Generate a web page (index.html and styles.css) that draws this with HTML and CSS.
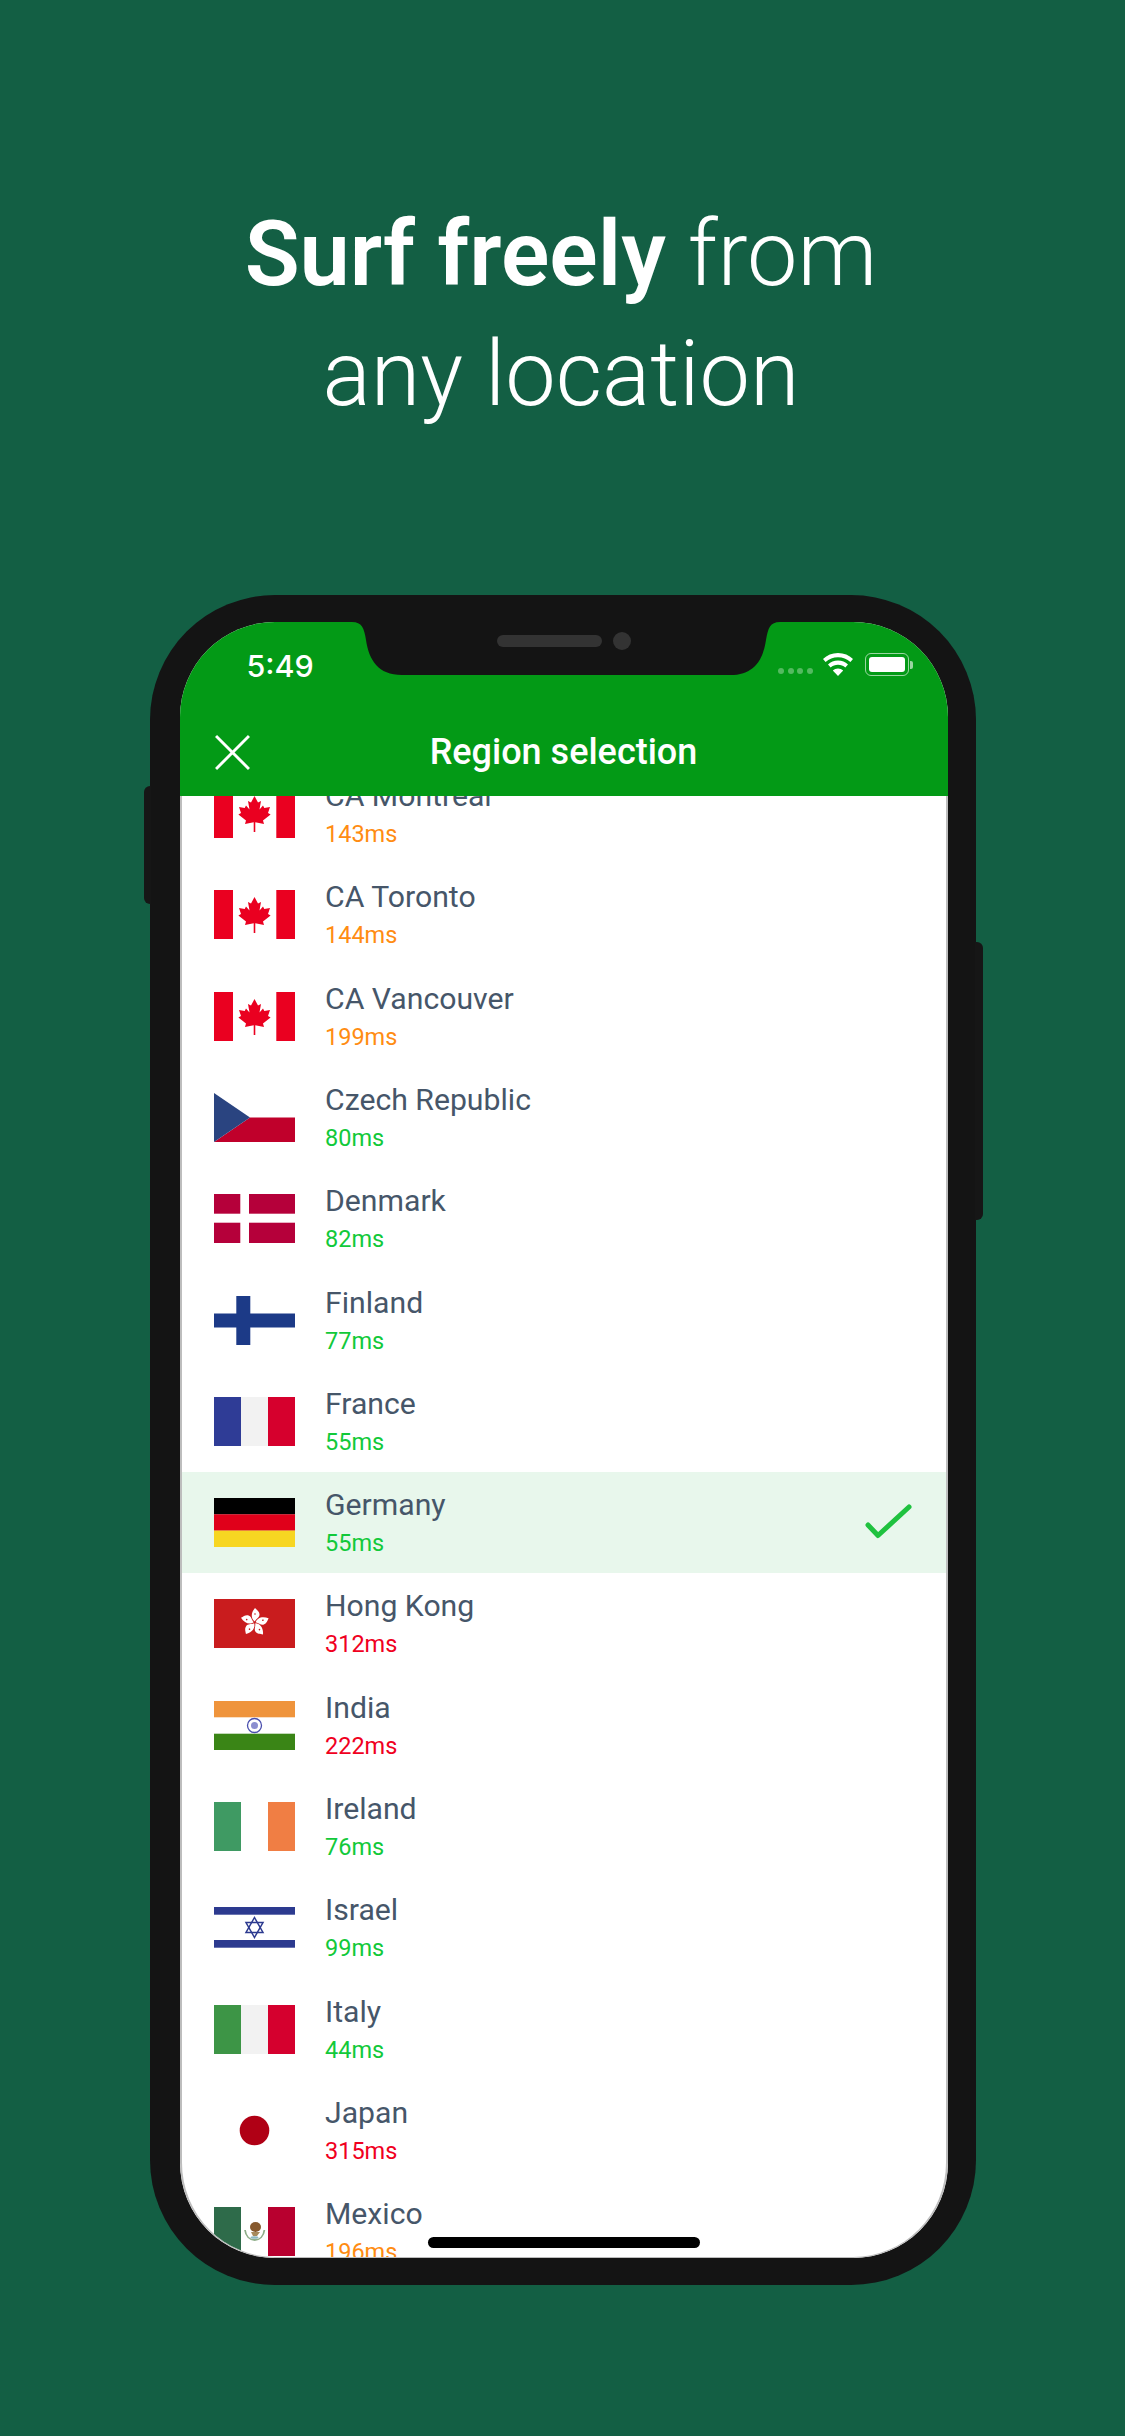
FILE: index.html
```html
<!DOCTYPE html>
<html lang="en">
<head>
<meta charset="utf-8">
<title>Surf freely from any location</title>
<link rel="stylesheet" href="styles.css">
</head>
<body>
<svg class="defs" width="0" height="0" aria-hidden="true">
  <defs>
    <symbol id="flag-ca" viewBox="0 0 81 49">
      <rect x="0" y="0" width="19" height="49" fill="#ea0020"/>
      <rect x="62.3" y="0" width="18.7" height="49" fill="#ea0020"/>
      <polygon fill="#ea0020" points="40.5,7 44,13.5 47,12 45.5,20.5 49,16.5 50.3,19 56,18 54,24 56.6,25.5 49,31.5 50,35 41.3,33.3 41.3,43 39.7,43 39.7,33.3 31,35 32,31.5 24.4,25.5 27,24 25,18 30.7,19 32,16.5 35.5,20.5 34,12 37,13.5"/>
    </symbol>
    <g id="hk-petal">
      <path fill="#fff" d="M40.700 22.500C37 20 36.500 14 41 9C43 11 45.500 12.500 45.500 15.500C45.500 18.500 42.500 19.500 40.700 22.500Z"/>
      <circle cx="41" cy="15" r=".8" fill="#c91c1e"/>
    </g>
  </defs>
</svg>
<main class="page">
  <h1 class="headline"><strong>Surf freely</strong> from<br>any location</h1>
  <div class="phone">
    <span class="side side-left"></span>
    <span class="side side-right"></span>
    <div class="screen">
      <header class="appbar">
        <div class="status">
          <span class="time">5:49</span>
          <div class="status-icons">
            <span class="dots"><i></i><i></i><i></i><i></i></span>
            <svg class="wifi" viewBox="0 0 30 23"><path fill="#fff" d="M15 0C9 0 4 2.3 0 6l2.6 3C6 6 10.3 4.2 15 4.2S24 6 27.400 9L30 6C26 2.300 21 0 15 0Z"/><path fill="#fff" d="M15 7.600C11 7.600 7.700 9 5 11.500l2.700 3C9.600 12.800 12.200 11.800 15 11.800s5.400 1 7.300 2.700l2.700-3C22.300 9 19 7.600 15 7.600Z"/><path fill="#fff" d="M15 15.400c-2 0-3.800.7-5.200 2L15 23l5.200-5.600c-1.400-1.300-3.200-2-5.200-2Z"/></svg>
            <span class="battery"><span class="battery-fill"></span></span>
            <span class="battery-nub"></span>
          </div>
        </div>
        <div class="navbar">
          <svg class="close" viewBox="0 0 34 34"><path d="M1 1L33 33M33 1L1 33" stroke="#fff" stroke-width="2.800" fill="none"/></svg>
          <h2 class="nav-title">Region selection</h2>
        </div>
      </header>
      <div class="viewport">
        <ul class="list">
          <li class="row">
            <svg class="flag" viewBox="0 0 81 49"><use href="#flag-ca"/></svg>
            <div class="info"><span class="name">CA Montreal</span><span class="ping mid">143ms</span></div>
          </li>
          <li class="row">
            <svg class="flag" viewBox="0 0 81 49"><use href="#flag-ca"/></svg>
            <div class="info"><span class="name">CA Toronto</span><span class="ping mid">144ms</span></div>
          </li>
          <li class="row">
            <svg class="flag" viewBox="0 0 81 49"><use href="#flag-ca"/></svg>
            <div class="info"><span class="name">CA Vancouver</span><span class="ping mid">199ms</span></div>
          </li>
          <li class="row">
            <svg class="flag" viewBox="0 0 81 49"><polygon fill="#c0002b" points="36,24.500 81,24.500 81,49 0,49"/><polygon fill="#2a4480" points="0,0 36,24.500 0,49"/></svg>
            <div class="info"><span class="name">Czech Republic</span><span class="ping good">80ms</span></div>
          </li>
          <li class="row">
            <svg class="flag" viewBox="0 0 81 49"><rect width="81" height="49" fill="#b5003a"/><rect x="26.300" width="8.700" height="49" fill="#fff"/><rect y="19.700" width="81" height="9" fill="#fff"/></svg>
            <div class="info"><span class="name">Denmark</span><span class="ping good">82ms</span></div>
          </li>
          <li class="row">
            <svg class="flag" viewBox="0 0 81 49"><rect x="22.300" width="14" height="49" fill="#1c3a87"/><rect y="17.500" width="81" height="14" fill="#1c3a87"/></svg>
            <div class="info"><span class="name">Finland</span><span class="ping good">77ms</span></div>
          </li>
          <li class="row">
            <svg class="flag" viewBox="0 0 81 49"><rect width="27" height="49" fill="#2f3c96"/><rect x="27" width="27" height="49" fill="#f2f2f2"/><rect x="54" width="27" height="49" fill="#d6002d"/></svg>
            <div class="info"><span class="name">France</span><span class="ping good">55ms</span></div>
          </li>
          <li class="row selected">
            <svg class="flag" viewBox="0 0 81 49"><rect width="81" height="16.400" fill="#000"/><rect y="16.300" width="81" height="16.400" fill="#e0001a"/><rect y="32.600" width="81" height="16.400" fill="#f7d622"/></svg>
            <div class="info"><span class="name">Germany</span><span class="ping good">55ms</span></div>
            <svg class="check" viewBox="0 0 50 40"><path d="M5 22L15 32.500L46 4" fill="none" stroke="#1fc23f" stroke-width="5" stroke-linecap="round" stroke-linejoin="round"/></svg>
          </li>
          <li class="row">
            <svg class="flag" viewBox="0 0 81 49"><rect width="81" height="49" fill="#c91c1e"/><use href="#hk-petal"/><use href="#hk-petal" transform="rotate(72 40.700 23.500)"/><use href="#hk-petal" transform="rotate(144 40.700 23.500)"/><use href="#hk-petal" transform="rotate(216 40.700 23.500)"/><use href="#hk-petal" transform="rotate(288 40.700 23.500)"/></svg>
            <div class="info"><span class="name">Hong Kong</span><span class="ping bad">312ms</span></div>
          </li>
          <li class="row">
            <svg class="flag" viewBox="0 0 81 49"><rect width="81" height="16.300" fill="#ef943c"/><rect y="32.700" width="81" height="16.300" fill="#3a8516"/><circle cx="40.500" cy="24.500" r="7" fill="#fff" stroke="#4a4fae" stroke-width="1.300"/><circle cx="40.500" cy="24.500" r="3.500" fill="#8c8fd0"/></svg>
            <div class="info"><span class="name">India</span><span class="ping bad">222ms</span></div>
          </li>
          <li class="row">
            <svg class="flag" viewBox="0 0 81 49"><rect width="27" height="49" fill="#3f9a63"/><rect x="54" width="27" height="49" fill="#f07e44"/></svg>
            <div class="info"><span class="name">Ireland</span><span class="ping good">76ms</span></div>
          </li>
          <li class="row">
            <svg class="flag" viewBox="0 0 81 49"><rect y="4" width="81" height="7.700" fill="#2c3a8f"/><rect y="37" width="81" height="7.700" fill="#2c3a8f"/><g fill="none" stroke="#2c3a8f" stroke-width="1.500"><polygon points="40.500,14.500 49,29.500 32,29.500"/><polygon points="40.500,34.500 49,19.500 32,19.500"/></g></svg>
            <div class="info"><span class="name">Israel</span><span class="ping good">99ms</span></div>
          </li>
          <li class="row">
            <svg class="flag" viewBox="0 0 81 49"><rect width="27" height="49" fill="#3d9546"/><rect x="27" width="27" height="49" fill="#f2f2f2"/><rect x="54" width="27" height="49" fill="#d5002e"/></svg>
            <div class="info"><span class="name">Italy</span><span class="ping good">44ms</span></div>
          </li>
          <li class="row">
            <svg class="flag" viewBox="0 0 81 49"><circle cx="40.500" cy="24.500" r="14.800" fill="#b00015"/></svg>
            <div class="info"><span class="name">Japan</span><span class="ping bad">315ms</span></div>
          </li>
          <li class="row">
            <svg class="flag" viewBox="0 0 81 49"><rect width="27" height="49" fill="#2e6b4a"/><rect x="54" width="27" height="49" fill="#b8002f"/><path d="M31 23c.8 6 4.500 10 9.700 10s8.900-4 9.700-10" fill="none" stroke="#8fae8a" stroke-width="1.800"/><ellipse cx="41.500" cy="20" rx="5.500" ry="5" fill="#86592e"/><path d="M37 25h9l-3 4h-4Z" fill="#a78a5c"/><ellipse cx="40.500" cy="30.500" rx="4" ry="1.300" fill="#8fb8c0"/></svg>
            <div class="info"><span class="name">Mexico</span><span class="ping mid">196ms</span></div>
          </li>
        </ul>
      </div>
      <span class="home-indicator"></span>
    </div>
    <svg class="notch" viewBox="0 0 428 53"><path fill="#141414" d="M0 0C10 0 12 6 14 18C17 38 26 53 50 53H378C402 53 411 38 414 18C416 6 418 0 428 0Z"/></svg>
    <span class="speaker"></span>
    <span class="camera"></span>
  </div>
</main>
</body>
</html>
```
FILE: styles.css
```css
* { box-sizing: border-box; }
html, body { margin: 0; padding: 0; }
body {
  width: 1125px;
  height: 2436px;
  overflow: hidden;
  background: #135f44;
  font-family: Roboto, "Liberation Sans", sans-serif;
}
.defs { position: absolute; }
.page {
  display: flex;
  flex-direction: column;
  align-items: center;
  padding-top: 195px;
}
.headline {
  margin: 0;
  width: 100%;
  padding-right: 3px;
  text-align: center;
  color: #fff;
  font-size: 90px;
  line-height: 120px;
  font-weight: 300;
}
.headline strong { font-weight: 560; }
.phone {
  position: relative;
  margin-top: 160px;
  width: 826px;
  height: 1690px;
  padding: 27px 28px 27px 30px;
  border-radius: 125px;
  background: #141414;
}
.side {
  position: absolute;
  background: #161616;
}
.side-left {
  left: -6px;
  top: 191px;
  width: 7px;
  height: 118px;
  border-radius: 6px 0 0 6px;
}
.side-right {
  right: -7px;
  top: 347px;
  width: 8px;
  height: 278px;
  border-radius: 0 6px 6px 0;
}
.screen {
  position: relative;
  display: flex;
  flex-direction: column;
  height: 100%;
  border-radius: 95px;
  overflow: hidden;
  background: #fff;
}
.appbar {
  display: flex;
  flex-direction: column;
  flex: none;
  height: 174px;
  background: #039a16;
  color: #fff;
}
.status {
  display: flex;
  justify-content: space-between;
  align-items: flex-start;
  padding: 26px 35px 0 67px;
  height: 94px;
}
.time {
  font-family: Inter, Roboto, sans-serif;
  font-size: 30.500px;
  line-height: 36px;
  font-weight: 500;
}
.status-icons {
  display: flex;
  align-items: center;
  margin-top: 5px;
  height: 23px;
}
.dots {
  display: flex;
  gap: 3.500px;
  margin: 12px 10px 0 0;
}
.dots i {
  width: 6px;
  height: 6px;
  border-radius: 50%;
  background: rgba(255,255,255,.32);
}
.wifi { width: 30px; height: 23px; margin-right: 12px; }
.battery {
  display: flex;
  width: 44px;
  height: 23px;
  padding: 3px;
  border: 1.500px solid rgba(255,255,255,.6);
  border-radius: 6px;
}
.battery-fill {
  flex: 1;
  border-radius: 3px;
  background: #fff;
}
.battery-nub {
  width: 2.500px;
  height: 8px;
  margin-left: 1.500px;
  border-radius: 0 2px 2px 0;
  background: rgba(255,255,255,.6);
}
.navbar {
  display: grid;
  grid-template-columns: 1fr auto 1fr;
  align-items: center;
  height: 72px;
  padding: 0 35px;
}
.close {
  width: 35px;
  height: 35px;
}
.nav-title {
  margin: 0;
  font-size: 36px;
  line-height: 44px;
  font-weight: 500;
  color: #fff;
}
.viewport {
  flex: 1;
  min-height: 0;
  overflow: hidden;
  background: #fff;
  border: solid #bdbdbd;
  border-width: 0 2px 1.500px;
  border-radius: 0 0 95px 95px;
}
.list {
  margin: -33.300px 0 0;
  padding: 0;
  list-style: none;
}
.row {
  display: flex;
  align-items: center;
  gap: 30.500px;
  height: 101.330px;
  padding: 0 33px 0 32px;
}
.row.selected { background: #e8f7ec; }
.flag { flex: none; width: 81px; height: 49px; }
.info {
  display: flex;
  flex-direction: column;
  flex: 1;
  gap: 5px;
}
.name {
  font-size: 30.200px;
  line-height: 36px;
  color: #465669;
}
.ping {
  font-size: 23.500px;
  line-height: 30px;
}
.ping.good { color: #12c93a; }
.ping.mid { color: #ff8c12; }
.ping.bad { color: #f0001e; }
.check { flex: none; width: 50px; height: 40px; }
.home-indicator {
  position: absolute;
  left: 248px;
  bottom: 10px;
  width: 272px;
  height: 11px;
  border-radius: 6px;
  background: #000;
}
.notch {
  position: absolute;
  left: 202px;
  top: 27px;
  width: 428px;
  height: 53px;
}
.speaker {
  position: absolute;
  left: 347px;
  top: 40px;
  width: 105px;
  height: 12px;
  border-radius: 6px;
  background: #333;
}
.camera {
  position: absolute;
  left: 463px;
  top: 37px;
  width: 18px;
  height: 18px;
  border-radius: 50%;
  background: #333;
}
```
